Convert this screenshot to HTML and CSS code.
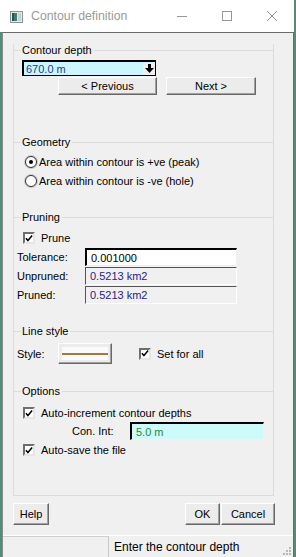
FILE: index.html
```html
<!DOCTYPE html>
<html>
<head>
    <meta charset="utf-8" />
    <title>Contour definition</title>
    <link rel="stylesheet" href="styles.css">
</head>
<body>
    <div class="window">
        <div class="titlebar">
            <svg class="app-icon" width="13" height="12" viewBox="0 0 13 12">
                <rect x="0.5" y="0.5" width="12" height="11" fill="#e4e8e8" stroke="#8c9494" />
                <rect x="2" y="2" width="5" height="8" fill="#3f7d74" />
                <rect x="2" y="2" width="2" height="8" fill="#25564f" />
                <rect x="8" y="2" width="3" height="8" fill="#c9d2d2" />
            </svg>
            <span class="title">Contour definition</span>
            <div class="controls">
                <div class="ctl"><svg width="10" height="10" viewBox="0 0 10 10"><line x1="0" y1="5.5" x2="10" y2="5.5" stroke="#999" /></svg></div>
                <div class="ctl"><svg width="10" height="10" viewBox="0 0 10 10"><rect x="0.5" y="0.5" width="9" height="9" fill="none" stroke="#999" /></svg></div>
                <div class="ctl"><svg width="10" height="10" viewBox="0 0 10 10"><path d="M0 0 L10 10 M10 0 L0 10" stroke="#999" /></svg></div>
            </div>
        </div>

        <div class="client">
            <div class="frame">
                <div class="section sec-depth">
                    <div class="sec-title"><span>Contour depth</span></div>
                    <div class="combo">
                        <span class="combo-text">670.0 m</span>
                        <span class="combo-btn">
                            <svg width="9" height="10" viewBox="0 0 9 10"><rect x="3" y="0" width="3" height="5" fill="#000" /><polygon points="0,4 9,4 4.5,9" fill="#000" /></svg>
                        </span>
                    </div>
                    <div class="nav-row">
                        <button class="btn btn-prev">&lt; Previous</button>
                        <button class="btn btn-next">Next &gt;</button>
                    </div>
                </div>

                <div class="section sec-geometry">
                    <div class="sec-title"><span>Geometry</span></div>
                    <label class="radio-row">
                        <span class="radio checked"><span class="dot"></span></span>
                        <span>Area within contour is +ve (peak)</span>
                    </label>
                    <label class="radio-row">
                        <span class="radio"></span>
                        <span>Area within contour is -ve (hole)</span>
                    </label>
                </div>

                <div class="section sec-pruning">
                    <div class="sec-title"><span>Pruning</span></div>
                    <label class="check-row prune-row">
                        <span class="check"><svg width="9" height="9" viewBox="0 0 9 9"><path d="M1 4.2 L3.3 6.8 L8 1.2" fill="none" stroke="#000" stroke-width="1.7" /></svg></span>
                        <span>Prune</span>
                    </label>
                    <div class="field-row">
                        <span class="field-label">Tolerance:</span>
                        <span class="field edit">0.001000</span>
                    </div>
                    <div class="field-row">
                        <span class="field-label">Unpruned:</span>
                        <span class="field readonly">0.5213 km2</span>
                    </div>
                    <div class="field-row">
                        <span class="field-label">Pruned:</span>
                        <span class="field readonly">0.5213 km2</span>
                    </div>
                </div>

                <div class="section sec-line">
                    <div class="sec-title"><span>Line style</span></div>
                    <div class="style-row">
                        <span class="field-label style-label">Style:</span>
                        <button class="btn style-btn"><span class="swatch"><span class="line"></span></span></button>
                        <label class="check-row set-all">
                            <span class="check"><svg width="9" height="9" viewBox="0 0 9 9"><path d="M1 4.2 L3.3 6.8 L8 1.2" fill="none" stroke="#000" stroke-width="1.7" /></svg></span>
                            <span>Set for all</span>
                        </label>
                    </div>
                </div>

                <div class="section sec-options">
                    <div class="sec-title"><span>Options</span></div>
                    <label class="check-row auto-inc">
                        <span class="check"><svg width="9" height="9" viewBox="0 0 9 9"><path d="M1 4.2 L3.3 6.8 L8 1.2" fill="none" stroke="#000" stroke-width="1.7" /></svg></span>
                        <span>Auto-increment contour depths</span>
                    </label>
                    <div class="conint-row">
                        <span class="conint-label">Con. Int:</span>
                        <span class="field conint">5.0 m</span>
                    </div>
                    <label class="check-row auto-save">
                        <span class="check"><svg width="9" height="9" viewBox="0 0 9 9"><path d="M1 4.2 L3.3 6.8 L8 1.2" fill="none" stroke="#000" stroke-width="1.7" /></svg></span>
                        <span>Auto-save the file</span>
                    </label>
                </div>
            </div>

            <div class="bottom-row">
                <button class="btn btn-help">Help</button>
                <div class="right-buttons">
                    <button class="btn btn-ok">OK</button>
                    <button class="btn btn-cancel">Cancel</button>
                </div>
            </div>

            <div class="statusbar">
                <div class="pane-left"></div>
                <div class="pane-text">Enter the contour depth</div>
                <svg class="grip" width="10" height="10" viewBox="0 0 10 10">
                    <rect x="7" y="1" width="2" height="2" fill="#b8b8b8" />
                    <rect x="4" y="4" width="2" height="2" fill="#b8b8b8" />
                    <rect x="7" y="4" width="2" height="2" fill="#b8b8b8" />
                    <rect x="1" y="7" width="2" height="2" fill="#b8b8b8" />
                    <rect x="4" y="7" width="2" height="2" fill="#b8b8b8" />
                    <rect x="7" y="7" width="2" height="2" fill="#b8b8b8" />
                </svg>
            </div>
        </div>
    </div>
</body>
</html>
```

FILE: styles.css
```css
body {
    margin: 0;
    padding: 0;
    background-color: #4f8f78;
    font-family: "Liberation Sans", Arial, sans-serif;
    font-size: 11px;
    color: #000;
    overflow: hidden;
}

.window {
    width: 294px;
    height: 557px;
    display: flex;
    flex-direction: column;
}

.titlebar {
    height: 32px;
    background-color: white;
    display: flex;
    align-items: center;
    flex-shrink: 0;
}

.app-icon {
    margin-left: 10px;
    margin-top: 1px;
}

.title {
    margin-left: 8px;
    font-size: 12.3px;
    color: #9a9a9a;
}

.controls {
    margin-left: auto;
    display: flex;
    height: 100%;
}

.ctl {
    width: 45px;
    display: flex;
    align-items: center;
    justify-content: center;
}

.client {
    flex: 1;
    margin-left: 2px;
    background-color: #f0f0f0;
    border-top: 1px solid #6b6b6b;
    border-left: 1px solid #8a8a8a;
    border-right: 1px solid #6b6b6b;
    padding-top: 11px;
    display: flex;
    flex-direction: column;
}

.frame {
    margin-left: 10px;
    width: 261px;
    box-sizing: border-box;
    border-left: 1px solid #dcdcdc;
    border-right: 1px solid #dcdcdc;
    border-bottom: 1px solid #dcdcdc;
}

.section {
    box-sizing: border-box;
}

.sec-depth { height: 92px; }
.sec-geometry { height: 75px; }
.sec-pruning { height: 114px; }
.sec-line { height: 60px; }
.sec-options { height: 110px; }

.sec-title {
    height: 12px;
    display: flex;
    align-items: center;
    margin-left: -1px;
    margin-right: -1px;
}

.sec-title::before {
    content: "";
    width: 8px;
    border-top: 1px solid #dcdcdc;
}

.sec-title::after {
    content: "";
    flex: 1;
    border-top: 1px solid #dcdcdc;
    margin-left: 2px;
}

.sec-title span {
    margin-left: 1px;
    line-height: 12px;
}

/* contour depth */
.combo {
    margin-top: 4px;
    margin-left: 8px;
    width: 134px;
    height: 16px;
    box-sizing: border-box;
    border: 1px solid #000;
    border-top-width: 2px;
    border-left-width: 2px;
    background-color: #ccf6ff;
    display: flex;
    align-items: center;
}

.combo-text {
    margin-left: 2px;
    color: #1d3b8e;
}

.combo-btn {
    margin-left: auto;
    width: 12px;
    height: 12px;
    background-color: #f0f0f0;
    display: flex;
    align-items: center;
    justify-content: center;
}

.nav-row {
    display: flex;
    margin-top: 1px;
}

.btn {
    font-family: "Liberation Sans", Arial, sans-serif;
    font-size: 11px;
    color: #000;
    background-color: #ececec;
    border: 1px solid;
    border-color: #ffffff #696969 #696969 #ffffff;
    box-shadow: inset -1px -1px 0 #a0a0a0;
    padding: 0;
    margin: 0;
}

.btn-prev {
    margin-left: 44px;
    width: 99px;
    height: 18px;
}

.btn-next {
    margin-left: 9px;
    width: 90px;
    height: 18px;
}

/* geometry */
.radio-row {
    display: flex;
    align-items: center;
    height: 14px;
    margin-left: 11px;
}

.radio-row:first-of-type {
    margin-top: 7px;
}

.radio-row + .radio-row {
    margin-top: 5px;
}

.radio {
    width: 12px;
    height: 12px;
    box-sizing: border-box;
    border-radius: 50%;
    border: 1px solid #333;
    background-color: white;
    display: flex;
    align-items: center;
    justify-content: center;
    box-shadow: 0 0 0 1px #c8c8c8;
    margin-right: 2px;
}

.dot {
    width: 4px;
    height: 4px;
    border-radius: 50%;
    background-color: #000;
}

/* checkboxes */
.check-row {
    display: flex;
    align-items: center;
    height: 14px;
}

.check {
    width: 12px;
    height: 12px;
    box-sizing: border-box;
    background-color: white;
    border: 2px solid;
    border-color: #6e6e6e #e6e6e6 #e6e6e6 #6e6e6e;
    display: flex;
    align-items: center;
    justify-content: center;
    margin-right: 6px;
}

.prune-row {
    margin-top: 8px;
    margin-left: 9px;
}

/* fields */
.field-row {
    display: flex;
    align-items: center;
    margin-top: 1px;
}

.prune-row + .field-row {
    margin-top: 3px;
}

.field-label {
    width: 68px;
    margin-left: 3px;
}

.field {
    width: 152px;
    height: 18px;
    box-sizing: border-box;
    padding-left: 4px;
    display: flex;
    align-items: center;
}

.edit {
    background-color: white;
    border: 1px solid;
    border-color: #000 #f0f0f0 #f0f0f0 #000;
    border-top-width: 2px;
    border-left-width: 2px;
}

.readonly {
    color: #1f2485;
    border: 1px solid;
    border-color: #555 #ffffff #ffffff #555;
}

/* line style */
.style-row {
    display: flex;
    align-items: center;
    margin-top: 6px;
}

.style-label {
    width: 41px;
}

.style-btn {
    width: 54px;
    height: 21px;
    display: flex;
    align-items: center;
    justify-content: center;
}

.swatch {
    width: 46px;
    height: 13px;
    background-color: #fafafa;
    display: flex;
    align-items: center;
}

.line {
    width: 100%;
    height: 2px;
    background-color: #a57640;
}

.set-all {
    margin-left: 27px;
}

/* options */
.auto-inc {
    margin-top: 9px;
    margin-left: 9px;
}

.conint-row {
    display: flex;
    align-items: center;
    margin-top: 2px;
}

.conint-label {
    margin-left: 58px;
    width: 58px;
}

.conint {
    width: 134px;
    background-color: #cffafa;
    color: #1e8a3c;
    border: 1px solid;
    border-color: #000 #f0f0f0 #f0f0f0 #000;
    border-top-width: 2px;
    border-left-width: 2px;
}

.auto-save {
    margin-top: 3px;
    margin-left: 9px;
}

/* bottom buttons */
.bottom-row {
    display: flex;
    justify-content: space-between;
    margin-top: 7px;
    margin-left: 10px;
    margin-right: 18px;
}

.right-buttons {
    display: flex;
    gap: 1px;
}

.btn-help {
    width: 36px;
    height: 22px;
}

.btn-ok {
    width: 35px;
    height: 22px;
}

.btn-cancel {
    width: 54px;
    height: 22px;
}

/* status bar */
.statusbar {
    margin-top: auto;
    height: 21px;
    display: flex;
    align-items: center;
    border-top: 1px solid #ffffff;
    position: relative;
}

.pane-left {
    width: 106px;
    height: 100%;
    box-sizing: border-box;
    border-top: 1px solid #d0d0d0;
    border-right: 1px solid #c8c8c8;
}

.pane-text {
    margin-left: 5px;
    font-size: 12px;
}

.grip {
    position: absolute;
    right: 1px;
    bottom: 1px;
}
```
